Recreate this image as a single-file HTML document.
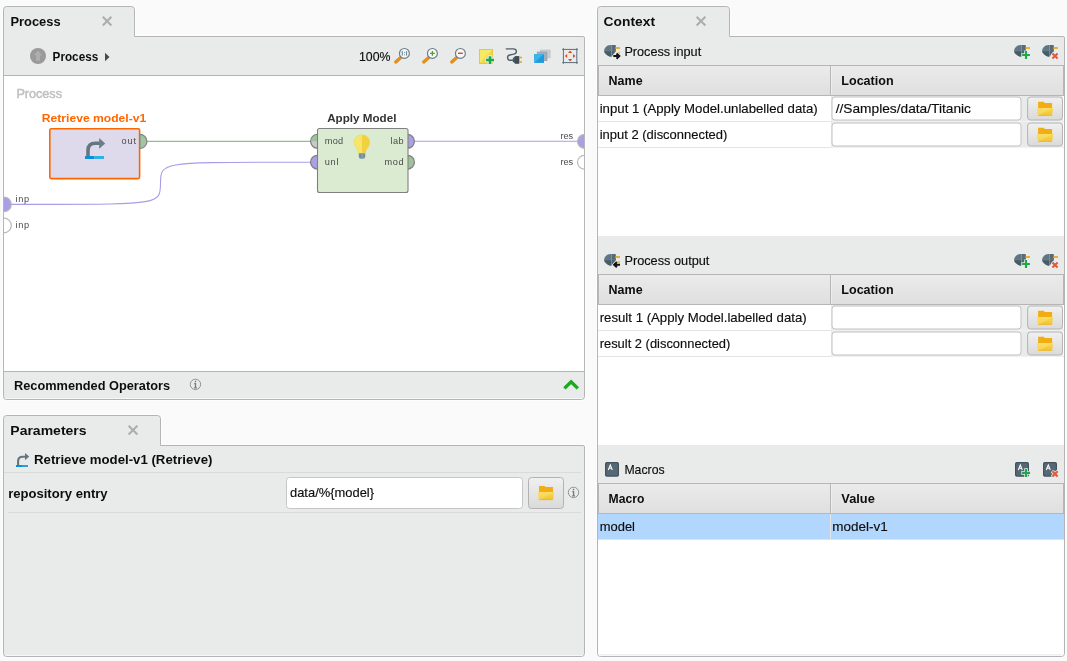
<!DOCTYPE html>
<html>
<head>
<meta charset="utf-8">
<title>RapidMiner Studio - Process</title>
<style>
html,body{margin:0;padding:0;background:#fafafa;overflow:hidden;}
body{width:1067px;height:661px;font-family:"Liberation Sans",sans-serif;}
svg{display:block;position:absolute;left:0;top:0;will-change:transform;filter:grayscale(0);}
text{font-family:"Liberation Sans",sans-serif;font-size:12.1px;fill:#0d0d0d;stroke:#0d0d0d;stroke-width:0.14px;}
.b{font-weight:bold;stroke:none;font-size:12.8px;}
.pl{font-size:9.2px;fill:#4a4a4a;stroke:none;}
</style>
</head>
<body>
<svg width="1067" height="661" viewBox="0 0 1067 661">
<rect width="1067" height="661" fill="#fafafa"/>

<defs>
<linearGradient id="fg" x1="0" y1="0" x2="0" y2="1"><stop offset="0" stop-color="#f8d957"/><stop offset="1" stop-color="#f2c22f"/></linearGradient>
</defs>
<!-- ============ PROCESS PANEL ============ -->
<g id="process-panel">
<path d="M3.5,9.5 Q3.5,6.5 6.5,6.5 H131.5 Q134.5,6.5 134.5,9.5 V36.5 H583 Q584.5,36.5 584.5,38 V396.5 Q584.5,399.5 581.5,399.5 H6.5 Q3.5,399.5 3.5,396.5 Z" fill="none" stroke="#fdfdfd" stroke-width="3"/>
<path d="M3.5,9.5 Q3.5,6.5 6.5,6.5 H131.5 Q134.5,6.5 134.5,9.5 V36.5 H583 Q584.5,36.5 584.5,38 V396.5 Q584.5,399.5 581.5,399.5 H6.5 Q3.5,399.5 3.5,396.5 Z" fill="#e9ebea" stroke="#b4b4b4"/>
<rect x="4" y="76" width="580" height="295" fill="#ffffff"/>
<path d="M4,75.5 H584 M4,371.5 H584" stroke="#b4b4b4" fill="none"/>
<text class="b" x="10.4" y="25.8" textLength="50.2" lengthAdjust="spacingAndGlyphs">Process</text>
<path d="M102.8,16.8 L111.4,25.4 M111.4,16.8 L102.8,25.4" stroke="#adadad" stroke-width="2.1" fill="none"/>
</g>
<g id="toolbar">
<circle cx="38" cy="56" r="8" fill="#9a9a9a"/>
<path d="M38,50.4 L42.2,55.3 H40 V60.8 H36 V55.3 H33.8 Z" fill="#aeaeae"/>
<text class="b" x="52.6" y="60.6" font-size="12.5" textLength="45.6" lengthAdjust="spacingAndGlyphs" style="font-size:12.5px">Process</text>
<path d="M105,52.8 L109.5,57 L105,61.2 Z" fill="#4a4a4a"/>
<text x="359" y="60.7" textLength="31.5" lengthAdjust="spacingAndGlyphs" style="font-size:12.1px">100%</text>
<g>
<path d="M395.75,61.95 L400.8,57.4" stroke="#e58e1a" stroke-width="3.4" stroke-linecap="round" fill="none"/>

<circle cx="404.4" cy="53.4" r="4.95" fill="#f4f6f7" stroke="#697c87" stroke-width="1.15"/>
<path d="M402.3,51.4 V55.6 M406.6,51.4 V55.6" stroke="#6a7c87" stroke-width="1" fill="none"/><path d="M401.4,52.3 L402.3,51.4 M405.7,52.3 L406.6,51.4" stroke="#6a7c87" stroke-width="0.7" fill="none"/><rect x="404" y="52.2" width="0.9" height="0.9" fill="#6a7c87"/><rect x="404" y="54.4" width="0.9" height="0.9" fill="#6a7c87"/>
</g><g>
<path d="M423.75,61.95 L428.8,57.4" stroke="#e58e1a" stroke-width="3.4" stroke-linecap="round" fill="none"/>

<circle cx="432.4" cy="53.4" r="4.95" fill="#f4f6f7" stroke="#697c87" stroke-width="1.15"/>
<path d="M432.4,50.9 V55.9 M419.9,53.4 H434.9" stroke="none"/><path d="M432.4,51 V55.8 M430,53.4 H434.8" stroke="#5a9e2d" stroke-width="1.3" fill="none"/>
</g><g>
<path d="M451.75,61.95 L456.8,57.4" stroke="#e58e1a" stroke-width="3.4" stroke-linecap="round" fill="none"/>

<circle cx="460.4" cy="53.4" r="4.95" fill="#f4f6f7" stroke="#697c87" stroke-width="1.15"/>
<path d="M458,53.3 H462.8" stroke="#d8472f" stroke-width="1.4" fill="none"/>
</g>
<!-- note+ -->
<g>
<rect x="479" y="49" width="14" height="15" fill="#f1d848"/>
<path d="M479,64 V49 H493 Z" fill="#f8e868"/>
<rect x="479.5" y="49.5" width="13" height="14" fill="none" stroke="#e6c93a" stroke-width="1"/>
<path d="M490,55.2 V64.6 M485.3,60 H494.7" stroke="#e9ebea" stroke-width="4.6" fill="none"/>
<path d="M490,56.2 V63.9 M486,60 H494" stroke="#1ea84c" stroke-width="2.6" fill="none"/>
</g>
<!-- plug / connect -->
<g>
<path d="M506.3,48.9 H513.2 Q516.4,48.9 516.4,51.6 Q516.4,54 513,54.4 L510.6,54.7 Q507.6,55.2 507.6,57.4 Q507.6,60.3 511,60.3 H513.5" stroke="#50616b" stroke-width="1.4" fill="none" stroke-linecap="round"/>
<path d="M512.8,58.2 L515,56.2 H519.2 V63.6 H515 L512.8,61.8 Z" fill="#4a5a63"/>
<path d="M515,56.2 H519.2 V63.6 H515 Z" fill="#3f4e56"/>
<path d="M519.2,57.6 H522 M519.2,62.1 H522" stroke="#eba11d" stroke-width="1.5" fill="none"/>
</g>
<!-- layers -->
<g>
<rect x="540.3" y="50" width="9.8" height="7.8" fill="#c7cfd4" stroke="#b4bec4" stroke-width="0.6"/>
<rect x="537.2" y="52" width="9.8" height="8.7" fill="#a3aeb5" stroke="#8f9ba3" stroke-width="0.6"/>
<rect x="534.2" y="54" width="9.8" height="8.9" fill="#1a9be0"/>
<path d="M534.2,62.9 V54 H544 Z" fill="#40b2ea"/>
</g>
<!-- auto arrange -->
<g>
<path d="M562.2,49.4 H578 M562.2,62.6 H578 M563.4,48.2 V63.8 M576.8,48.2 V63.8" stroke="#5b707c" stroke-width="1" fill="none"/>
<path d="M570.1,50.6 L572.2,53 H568 Z M570.1,61.4 L572.2,59 H568 Z M564.8,56 L567.2,53.9 V58.1 Z M575.4,56 L573,53.9 V58.1 Z" fill="#e14e1e"/>
</g>
</g>
<defs><clipPath id="cvclip"><rect x="4" y="76" width="580" height="295"/></clipPath></defs>
<g id="canvas" clip-path="url(#cvclip)">
<text x="16.4" y="98" textLength="45.6" lengthAdjust="spacingAndGlyphs" style="fill:#c1c1c1;stroke:#c1c1c1;stroke-width:0.5px">Process</text>
<!-- connections -->
<path d="M147,141.3 H311" stroke="#8fbf8b" stroke-width="1.2" fill="none"/>
<path d="M415,141.3 H577" stroke="#a99de6" stroke-width="1.1" fill="none"/>
<path d="M11,204.4 H40 C160,204.4 160.5,204 160.5,183.3 C160.5,162.6 161,162.2 281,162.2 H311" stroke="#a99de6" stroke-width="1.1" fill="none"/>
<!-- process ports left -->
<circle cx="4" cy="204.4" r="7.3" fill="#a99ee8" stroke="#b9b9b9" stroke-width="1.2"/>
<circle cx="4" cy="225.5" r="7.3" fill="#ffffff" stroke="#b9b9b9" stroke-width="1.2"/>
<text class="pl" x="15.4" y="201.8" textLength="13.8" lengthAdjust="spacing">inp</text>
<text class="pl" x="15.4" y="227.5" textLength="13.8" lengthAdjust="spacing">inp</text>
<!-- process ports right -->
<circle cx="584.4" cy="141.4" r="6.9" fill="#a99ee8" stroke="#b9b9b9" stroke-width="1.2"/>
<circle cx="584.4" cy="162.3" r="6.9" fill="#ffffff" stroke="#b9b9b9" stroke-width="1.2"/>
<text class="pl" x="560.4" y="138.9" textLength="12.7" lengthAdjust="spacing">res</text>
<text class="pl" x="560.4" y="164.7" textLength="12.7" lengthAdjust="spacing">res</text>
<!-- Retrieve operator -->
<text class="b" x="41.8" y="122" textLength="104.4" lengthAdjust="spacingAndGlyphs" style="font-size:11.6px;fill:#ff6600;stroke:none">Retrieve model-v1</text>
<rect x="49.8" y="128.8" width="89.8" height="49.8" rx="1.5" fill="#dedaeb" stroke="#ff6600" stroke-width="1.6"/>
<path d="M139.9,134.4 A7,7 0 0 1 139.9,148.4 Z" fill="#9fc79b" stroke="#858585" stroke-width="1.25"/>
<text class="pl" x="121.5" y="144" textLength="14.6" lengthAdjust="spacing">out</text>
<g>
<path d="M88,156.2 V150.5 Q88,143.3 95.5,143.3 H100" stroke="#647780" stroke-width="3.6" fill="none"/>
<path d="M99.2,138 L105.2,143.4 L99.2,148.8 Z" fill="#6b7d86"/>
<rect x="85" y="156" width="9.5" height="3" fill="#0c8ed8"/>
<rect x="94.5" y="156" width="9.5" height="3" fill="#2fb0ea"/>
</g>
<!-- Apply Model operator -->
<text class="b" x="327.2" y="122" textLength="69.2" lengthAdjust="spacingAndGlyphs" style="font-size:11.6px;fill:#333;stroke:none">Apply Model</text>
<g stroke="#828282" stroke-width="1.3">
<circle cx="317.5" cy="141.3" r="6.9" fill="#c9c9c9"/>
<circle cx="317.5" cy="162.2" r="6.9" fill="#ab9fe6"/>
<circle cx="407.5" cy="141.3" r="6.9" fill="#ab9fe6"/>
<circle cx="407.5" cy="162.2" r="6.9" fill="#9dc39a"/>
</g>
<path d="M311.2,141.3 A6.3,6.3 0 0 1 317.5,135 V141.3 Z" fill="#9dc39a"/>
<rect x="317.5" y="128.5" width="90.5" height="64" rx="2" fill="#dbebd2" stroke="#808080" stroke-width="1.1"/>
<text class="pl" x="324.7" y="144" textLength="18.5" lengthAdjust="spacing">mod</text>
<text class="pl" x="324.7" y="164.9" textLength="13.8" lengthAdjust="spacing">unl</text>
<text class="pl" x="390.5" y="144" textLength="13" lengthAdjust="spacing">lab</text>
<text class="pl" x="384.5" y="164.9" textLength="19" lengthAdjust="spacing">mod</text>
<g>
<path d="M362,134.9 C357.4,134.9 354.2,138.2 354.2,142.3 C354.2,145.2 355.8,146.8 357,148.4 C357.9,149.6 358.2,150.8 358.2,152.8 H365.8 C365.8,150.8 366.1,149.6 367,148.4 C368.2,146.8 369.8,145.2 369.8,142.3 C369.8,138.2 366.6,134.9 362,134.9 Z" fill="#f0d23f" stroke="#ecd04a" stroke-width="0.6"/>
<path d="M362,134.9 C357.4,134.9 354.2,138.2 354.2,142.3 C354.2,145.2 355.8,146.8 357,148.4 C357.9,149.6 358.2,150.8 358.2,152.8 H362 Z" fill="#f6e566"/>
<path d="M358.8,153.2 H365.2 V156.6 Q365.2,158.8 363,158.8 H361 Q358.8,158.8 358.8,156.6 Z" fill="#758d9c"/>
<rect x="361.6" y="153.2" width="1.2" height="5.6" fill="#90a5b2"/>
</g>
</g>
<g id="recommended">
<path d="M5.5,398.5 H582.5" stroke="#f7f7f7" fill="none"/>
<text class="b" x="14" y="389.9" textLength="156" lengthAdjust="spacingAndGlyphs">Recommended Operators</text>
<circle cx="195.45" cy="384.4" r="5.2" fill="none" stroke="#8c8c8c" stroke-width="0.95"/><rect x="194.75" y="380.80" width="1.5" height="1.5" rx="0.4" fill="#7a7a7a"/><path d="M194.25,383.65 H195.50 V387.70 M194.15,387.85 H196.90" stroke="#7a7a7a" stroke-width="1.15" fill="none"/><rect x="194.90" y="383.50" width="1.2" height="4.4" fill="#7a7a7a"/>
<path d="M564.4,388.4 L571.1,381.8 L577.8,388.4" stroke="#1aaa1a" stroke-width="3.4" fill="none" stroke-linejoin="miter"/>
</g>
<g id="params-panel">
<path d="M3.5,418.5 Q3.5,415.5 6.5,415.5 H157.5 Q160.5,415.5 160.5,418.5 V445.5 H583 Q584.5,445.5 584.5,447 V653.5 Q584.5,656.5 581.5,656.5 H6.5 Q3.5,656.5 3.5,653.5 Z" fill="none" stroke="#fdfdfd" stroke-width="3"/>
<path d="M3.5,418.5 Q3.5,415.5 6.5,415.5 H157.5 Q160.5,415.5 160.5,418.5 V445.5 H583 Q584.5,445.5 584.5,447 V653.5 Q584.5,656.5 581.5,656.5 H6.5 Q3.5,656.5 3.5,653.5 Z" fill="#e9ebea" stroke="#b4b4b4"/>
<text class="b" x="10.3" y="435" textLength="76.3" lengthAdjust="spacingAndGlyphs">Parameters</text>
<path d="M128.6,425.8 L137.4,434.4 M137.4,425.8 L128.6,434.4" stroke="#adadad" stroke-width="2.1" fill="none"/>
<path d="M5.5,655.5 H582.5" stroke="#f7f7f7" fill="none"/>
<path d="M4,472.5 H581" stroke="#d9dada" fill="none"/>
<path d="M8,512.5 H581" stroke="#d9dada" fill="none"/>
<g>
<path d="M18.1,465.2 V461.2 Q18.1,456.7 22.6,456.7 H25.6" stroke="#63767f" stroke-width="2.1" fill="none"/>
<path d="M25,452.9 L29.2,456.6 L25,460.2 Z" fill="#63767f"/>
<rect x="16" y="465" width="6" height="2" fill="#0c8ed8"/>
<rect x="22" y="465" width="6" height="2" fill="#2a9fdf"/>
</g>
<text class="b" x="34" y="464.3" textLength="178.4" lengthAdjust="spacingAndGlyphs">Retrieve model-v1 (Retrieve)</text>
<text class="b" x="8.2" y="498.1" textLength="99.4" lengthAdjust="spacingAndGlyphs">repository entry</text>
<rect x="286.5" y="477.5" width="236" height="31" rx="3" fill="#ffffff" stroke="#c6c6c6"/>
<text x="290" y="497" textLength="84" lengthAdjust="spacingAndGlyphs">data/%{model}</text>
<defs><linearGradient id="btng" x1="0" y1="0" x2="0" y2="1"><stop offset="0" stop-color="#f0f0f0"/><stop offset="1" stop-color="#dadada"/></linearGradient></defs>
<rect x="528.5" y="477.5" width="35" height="31" rx="3" fill="url(#btng)" stroke="#b2b2b2"/>
<g transform="translate(538,486)"><path d="M1,0 H6.6 L7.6,1.1 H15 V8 H1 Z" fill="#f2ad13"/><path d="M0.1,6.1 H16 L15,14 H0.9 Z" fill="url(#fg)"/><path d="M0.9,13.7 H15" stroke="#e9b62c" stroke-width="0.7" fill="none"/><path d="M0.9,14 L0.1,6.1 H16 Z" fill="#fbe47a" opacity="0.45"/></g>
<circle cx="573.5" cy="492.4" r="5.2" fill="none" stroke="#8c8c8c" stroke-width="0.95"/><rect x="572.80" y="488.80" width="1.5" height="1.5" rx="0.4" fill="#7a7a7a"/><path d="M572.30,491.65 H573.55 V495.70 M572.20,495.85 H574.95" stroke="#7a7a7a" stroke-width="1.15" fill="none"/><rect x="572.95" y="491.50" width="1.2" height="4.4" fill="#7a7a7a"/>
</g>
<g id="context-panel">
<defs><linearGradient id="hdrg" x1="0" y1="0" x2="0" y2="1"><stop offset="0" stop-color="#ebebeb"/><stop offset="1" stop-color="#dfdfdf"/></linearGradient></defs>
<path d="M597.5,9.5 Q597.5,6.5 600.5,6.5 H726.5 Q729.5,6.5 729.5,9.5 V36.5 H1063 Q1064.5,36.5 1064.5,38 V653.5 Q1064.5,656.5 1061.5,656.5 H600.5 Q597.5,656.5 597.5,653.5 Z" fill="none" stroke="#fdfdfd" stroke-width="3"/>
<path d="M597.5,9.5 Q597.5,6.5 600.5,6.5 H726.5 Q729.5,6.5 729.5,9.5 V36.5 H1063 Q1064.5,36.5 1064.5,38 V653.5 Q1064.5,656.5 1061.5,656.5 H600.5 Q597.5,656.5 597.5,653.5 Z" fill="#e9ebea" stroke="#b4b4b4"/>
<text class="b" x="603.6" y="25.8" textLength="51.4" lengthAdjust="spacingAndGlyphs">Context</text>
<path d="M696.6,16.8 L705.4,25.4 M705.4,16.8 L696.6,25.4" stroke="#adadad" stroke-width="2.1" fill="none"/>
<g>
<g transform="translate(604,44)">
<clipPath id="plc1"><path d="M0.1,7 C0.1,4 3,1 6.2,1 H11 Q11.9,1 11.9,1.9 V7.3 L7.6,12.4 Q6.8,13.1 5.9,12.7 C3,11.4 0.1,9.6 0.1,7 Z"/></clipPath>
<g clip-path="url(#plc1)">
<rect x="0" y="0" width="7.4" height="7"fill="#607783"/>
<rect x="7.4" y="0" width="5" height="7" fill="#566d79"/>
<rect x="0" y="7" width="7.4" height="7" fill="#465c68"/>
<rect x="7.4" y="7" width="5" height="7" fill="#4c636f"/>
<path d="M7.4,0 V14" stroke="#8a9da8" stroke-width="0.7" opacity="0.55"/>
<path d="M0,7 H12" stroke="#7a8f9a" stroke-width="0.5" opacity="0.6"/>
</g>
<rect x="11.4" y="3.1" width="4.6" height="1.8" fill="#eba91f"/>
</g><rect x="617.4" y="52.4" width="2.6" height="1.2" fill="#eba91f"/><path d="M613.2,56.1 H618.2 M616.5,53.4 L619.3,56.1 L616.5,58.8" stroke="#e9ebea" stroke-width="3.4" fill="none"/><path d="M613.3,56.1 H618.4 M616.5,53.5 L619.3,56.1 L616.5,58.7" stroke="#141414" stroke-width="2" fill="none" stroke-linejoin="miter"/>
<text x="624.4" y="56.1" textLength="76.8" lengthAdjust="spacingAndGlyphs" style="font-size:12.1px">Process input</text>
<g transform="translate(1014,44)">
<clipPath id="plc2"><path d="M0.1,7 C0.1,4 3,1 6.2,1 H11 Q11.9,1 11.9,1.9 V7.3 L7.6,12.4 Q6.8,13.1 5.9,12.7 C3,11.4 0.1,9.6 0.1,7 Z"/></clipPath>
<g clip-path="url(#plc2)">
<rect x="0" y="0" width="7.4" height="7"fill="#607783"/>
<rect x="7.4" y="0" width="5" height="7" fill="#566d79"/>
<rect x="0" y="7" width="7.4" height="7" fill="#465c68"/>
<rect x="7.4" y="7" width="5" height="7" fill="#4c636f"/>
<path d="M7.4,0 V14" stroke="#8a9da8" stroke-width="0.7" opacity="0.55"/>
<path d="M0,7 H12" stroke="#7a8f9a" stroke-width="0.5" opacity="0.6"/>
</g>
<rect x="11.4" y="3.1" width="4.6" height="1.8" fill="#eba91f"/>
</g><path d="M1026,50.4 V59.6 M1021.4,55 H1030.6" stroke="#e9ebea" stroke-width="3.6" fill="none"/><path d="M1026,51.1 V58.9 M1022.1,55 H1029.9" stroke="#1ea84c" stroke-width="2.1" fill="none"/><g transform="translate(1042,44)">
<clipPath id="plc3"><path d="M0.1,7 C0.1,4 3,1 6.2,1 H11 Q11.9,1 11.9,1.9 V7.3 L7.6,12.4 Q6.8,13.1 5.9,12.7 C3,11.4 0.1,9.6 0.1,7 Z"/></clipPath>
<g clip-path="url(#plc3)">
<rect x="0" y="0" width="7.4" height="7"fill="#607783"/>
<rect x="7.4" y="0" width="5" height="7" fill="#566d79"/>
<rect x="0" y="7" width="7.4" height="7" fill="#465c68"/>
<rect x="7.4" y="7" width="5" height="7" fill="#4c636f"/>
<path d="M7.4,0 V14" stroke="#8a9da8" stroke-width="0.7" opacity="0.55"/>
<path d="M0,7 H12" stroke="#7a8f9a" stroke-width="0.5" opacity="0.6"/>
</g>
<rect x="11.4" y="3.1" width="4.6" height="1.8" fill="#eba91f"/>
</g><path d="M1052,53 L1058,59 M1058,53 L1052,59" stroke="#e9ebea" stroke-width="3.6" fill="none"/><path d="M1052.4,53.4 L1057.6,58.6 M1057.6,53.4 L1052.4,58.6" stroke="#e05a3b" stroke-width="2.1" fill="none"/>
<rect x="598" y="96" width="466" height="140" fill="#ffffff"/>
<rect x="598.5" y="65.5" width="465" height="30" fill="url(#hdrg)" stroke="#b6b6b6"/>
<path d="M830.5,66 V95" stroke="#b6b6b6" fill="none"/>
<path d="M831.5,66 V95" stroke="#f2f2f2" fill="none" opacity="0.7"/>
<text class="b" x="608.6" y="84.9" textLength="34" lengthAdjust="spacingAndGlyphs" style="font-size:12.5px">Name</text>
<text class="b" x="841.3" y="84.9" textLength="52.3" lengthAdjust="spacingAndGlyphs" style="font-size:12.5px">Location</text>
<path d="M598,121.5 H1064" stroke="#e4e4e4" fill="none"/>
<text x="599.7" y="112.9" textLength="218" lengthAdjust="spacingAndGlyphs">input 1 (Apply Model.unlabelled data)</text>
<rect x="831" y="96" width="232" height="25" fill="#e9ebea"/><path d="M831,121.5 H1063" stroke="#f0f1f1" fill="none"/><rect x="832" y="97" width="189" height="23" rx="3" fill="#ffffff" stroke="#c2c2c2"/>
<text x="835.7" y="112.9" textLength="135.3" lengthAdjust="spacingAndGlyphs">//Samples/data/Titanic</text>
<rect x="1027.6" y="97" width="34.9" height="23" rx="3" fill="url(#btng)" stroke="#b4b4b4"/>
<g transform="translate(1037.1,101.8)"><path d="M1,0 H6.6 L7.6,1.1 H15 V8 H1 Z" fill="#f2ad13"/><path d="M0.1,6.1 H16 L15,14 H0.9 Z" fill="url(#fg)"/><path d="M0.9,13.7 H15" stroke="#e9b62c" stroke-width="0.7" fill="none"/><path d="M0.9,14 L0.1,6.1 H16 Z" fill="#fbe47a" opacity="0.45"/></g>
<path d="M598,147.5 H1064" stroke="#e4e4e4" fill="none"/>
<text x="599.7" y="138.9" textLength="127.6" lengthAdjust="spacingAndGlyphs">input 2 (disconnected)</text>
<rect x="831" y="122" width="232" height="25" fill="#e9ebea"/><path d="M831,147.5 H1063" stroke="#f0f1f1" fill="none"/><rect x="832" y="123" width="189" height="23" rx="3" fill="#ffffff" stroke="#c2c2c2"/>
<rect x="1027.6" y="123" width="34.9" height="23" rx="3" fill="url(#btng)" stroke="#b4b4b4"/>
<g transform="translate(1037.1,127.8)"><path d="M1,0 H6.6 L7.6,1.1 H15 V8 H1 Z" fill="#f2ad13"/><path d="M0.1,6.1 H16 L15,14 H0.9 Z" fill="url(#fg)"/><path d="M0.9,13.7 H15" stroke="#e9b62c" stroke-width="0.7" fill="none"/><path d="M0.9,14 L0.1,6.1 H16 Z" fill="#fbe47a" opacity="0.45"/></g>
</g>
<g>
<g transform="translate(604,253)">
<clipPath id="plc4"><path d="M0.1,7 C0.1,4 3,1 6.2,1 H11 Q11.9,1 11.9,1.9 V7.3 L7.6,12.4 Q6.8,13.1 5.9,12.7 C3,11.4 0.1,9.6 0.1,7 Z"/></clipPath>
<g clip-path="url(#plc4)">
<rect x="0" y="0" width="7.4" height="7"fill="#607783"/>
<rect x="7.4" y="0" width="5" height="7" fill="#566d79"/>
<rect x="0" y="7" width="7.4" height="7" fill="#465c68"/>
<rect x="7.4" y="7" width="5" height="7" fill="#4c636f"/>
<path d="M7.4,0 V14" stroke="#8a9da8" stroke-width="0.7" opacity="0.55"/>
<path d="M0,7 H12" stroke="#7a8f9a" stroke-width="0.5" opacity="0.6"/>
</g>
<rect x="11.4" y="3.1" width="4.6" height="1.8" fill="#eba91f"/>
</g><rect x="617.4" y="261.4" width="2.6" height="1.2" fill="#eba91f"/><path d="M620,264.7 H615 M616.9,262 L614.1,264.7 L616.9,267.4" stroke="#e9ebea" stroke-width="3.4" fill="none"/><path d="M620,264.7 H615 M616.9,262.1 L614.1,264.7 L616.9,267.3" stroke="#141414" stroke-width="2" fill="none" stroke-linejoin="miter"/>
<text x="624.4" y="265.1" textLength="85" lengthAdjust="spacingAndGlyphs" style="font-size:12.1px">Process output</text>
<g transform="translate(1014,253)">
<clipPath id="plc5"><path d="M0.1,7 C0.1,4 3,1 6.2,1 H11 Q11.9,1 11.9,1.9 V7.3 L7.6,12.4 Q6.8,13.1 5.9,12.7 C3,11.4 0.1,9.6 0.1,7 Z"/></clipPath>
<g clip-path="url(#plc5)">
<rect x="0" y="0" width="7.4" height="7"fill="#607783"/>
<rect x="7.4" y="0" width="5" height="7" fill="#566d79"/>
<rect x="0" y="7" width="7.4" height="7" fill="#465c68"/>
<rect x="7.4" y="7" width="5" height="7" fill="#4c636f"/>
<path d="M7.4,0 V14" stroke="#8a9da8" stroke-width="0.7" opacity="0.55"/>
<path d="M0,7 H12" stroke="#7a8f9a" stroke-width="0.5" opacity="0.6"/>
</g>
<rect x="11.4" y="3.1" width="4.6" height="1.8" fill="#eba91f"/>
</g><path d="M1026,259.4 V268.6 M1021.4,264 H1030.6" stroke="#e9ebea" stroke-width="3.6" fill="none"/><path d="M1026,260.1 V267.9 M1022.1,264 H1029.9" stroke="#1ea84c" stroke-width="2.1" fill="none"/><g transform="translate(1042,253)">
<clipPath id="plc6"><path d="M0.1,7 C0.1,4 3,1 6.2,1 H11 Q11.9,1 11.9,1.9 V7.3 L7.6,12.4 Q6.8,13.1 5.9,12.7 C3,11.4 0.1,9.6 0.1,7 Z"/></clipPath>
<g clip-path="url(#plc6)">
<rect x="0" y="0" width="7.4" height="7"fill="#607783"/>
<rect x="7.4" y="0" width="5" height="7" fill="#566d79"/>
<rect x="0" y="7" width="7.4" height="7" fill="#465c68"/>
<rect x="7.4" y="7" width="5" height="7" fill="#4c636f"/>
<path d="M7.4,0 V14" stroke="#8a9da8" stroke-width="0.7" opacity="0.55"/>
<path d="M0,7 H12" stroke="#7a8f9a" stroke-width="0.5" opacity="0.6"/>
</g>
<rect x="11.4" y="3.1" width="4.6" height="1.8" fill="#eba91f"/>
</g><path d="M1052,262 L1058,268 M1058,262 L1052,268" stroke="#e9ebea" stroke-width="3.6" fill="none"/><path d="M1052.4,262.4 L1057.6,267.6 M1057.6,262.4 L1052.4,267.6" stroke="#e05a3b" stroke-width="2.1" fill="none"/>
<rect x="598" y="305" width="466" height="140" fill="#ffffff"/>
<rect x="598.5" y="274.5" width="465" height="30" fill="url(#hdrg)" stroke="#b6b6b6"/>
<path d="M830.5,275 V304" stroke="#b6b6b6" fill="none"/>
<path d="M831.5,275 V304" stroke="#f2f2f2" fill="none" opacity="0.7"/>
<text class="b" x="608.6" y="293.9" textLength="34" lengthAdjust="spacingAndGlyphs" style="font-size:12.5px">Name</text>
<text class="b" x="841.3" y="293.9" textLength="52.3" lengthAdjust="spacingAndGlyphs" style="font-size:12.5px">Location</text>
<path d="M598,330.5 H1064" stroke="#e4e4e4" fill="none"/>
<text x="599.7" y="321.9" textLength="207" lengthAdjust="spacingAndGlyphs">result 1 (Apply Model.labelled data)</text>
<rect x="831" y="305" width="232" height="25" fill="#e9ebea"/><path d="M831,330.5 H1063" stroke="#f0f1f1" fill="none"/><rect x="832" y="306" width="189" height="23" rx="3" fill="#ffffff" stroke="#c2c2c2"/>
<rect x="1027.6" y="306" width="34.9" height="23" rx="3" fill="url(#btng)" stroke="#b4b4b4"/>
<g transform="translate(1037.1,310.8)"><path d="M1,0 H6.6 L7.6,1.1 H15 V8 H1 Z" fill="#f2ad13"/><path d="M0.1,6.1 H16 L15,14 H0.9 Z" fill="url(#fg)"/><path d="M0.9,13.7 H15" stroke="#e9b62c" stroke-width="0.7" fill="none"/><path d="M0.9,14 L0.1,6.1 H16 Z" fill="#fbe47a" opacity="0.45"/></g>
<path d="M598,356.5 H1064" stroke="#e4e4e4" fill="none"/>
<text x="599.7" y="347.9" textLength="130.6" lengthAdjust="spacingAndGlyphs">result 2 (disconnected)</text>
<rect x="831" y="331" width="232" height="25" fill="#e9ebea"/><path d="M831,356.5 H1063" stroke="#f0f1f1" fill="none"/><rect x="832" y="332" width="189" height="23" rx="3" fill="#ffffff" stroke="#c2c2c2"/>
<rect x="1027.6" y="332" width="34.9" height="23" rx="3" fill="url(#btng)" stroke="#b4b4b4"/>
<g transform="translate(1037.1,336.8)"><path d="M1,0 H6.6 L7.6,1.1 H15 V8 H1 Z" fill="#f2ad13"/><path d="M0.1,6.1 H16 L15,14 H0.9 Z" fill="url(#fg)"/><path d="M0.9,13.7 H15" stroke="#e9b62c" stroke-width="0.7" fill="none"/><path d="M0.9,14 L0.1,6.1 H16 Z" fill="#fbe47a" opacity="0.45"/></g>
</g>
<g>
<g transform="translate(605,462)"><rect x="0" y="0" width="14" height="14.8" rx="1.8" fill="#41525c"/><rect x="1.2" y="1.2" width="11.6" height="12.4" rx="1" fill="#556975"/><path d="M3.3,8 L5.3,2.9 L7.3,8 M4.1,6.3 H6.5" stroke="#ffffff" stroke-width="1.05" fill="none"/></g>
<text x="624.4" y="474.1" textLength="40.2" lengthAdjust="spacingAndGlyphs" style="font-size:12.1px">Macros</text>
<g transform="translate(1015,462)"><rect x="0" y="0" width="14" height="14.8" rx="1.8" fill="#41525c"/><rect x="1.2" y="1.2" width="11.6" height="12.4" rx="1" fill="#556975"/><path d="M3.3,8 L5.3,2.9 L7.3,8 M4.1,6.3 H6.5" stroke="#ffffff" stroke-width="1.05" fill="none"/></g><path d="M1026.05,468.2 V477.6 M1021.35,472.9 H1030.75" stroke="#e9ebea" stroke-width="3.6" fill="none"/><path d="M1026.05,468.9 V476.9 M1022.05,472.9 H1030.05" stroke="#1ea84c" stroke-width="2.1" fill="none"/><g transform="translate(1043,462)"><rect x="0" y="0" width="14" height="14.8" rx="1.8" fill="#41525c"/><rect x="1.2" y="1.2" width="11.6" height="12.4" rx="1" fill="#556975"/><path d="M3.3,8 L5.3,2.9 L7.3,8 M4.1,6.3 H6.5" stroke="#ffffff" stroke-width="1.05" fill="none"/></g><path d="M1052,470.9 L1058,476.9 M1058,470.9 L1052,476.9" stroke="#e9ebea" stroke-width="3.6" fill="none"/><path d="M1052.4,471.3 L1057.6,476.5 M1057.6,471.3 L1052.4,476.5" stroke="#e05a3b" stroke-width="2.1" fill="none"/>
<rect x="598" y="514" width="466" height="140" fill="#ffffff"/>
<path d="M598,654.5 H1064" stroke="#eff0f0" fill="none"/><path d="M599,655.5 H1063" stroke="#f7f7f7" fill="none"/>
<rect x="598.5" y="483.5" width="465" height="30" fill="url(#hdrg)" stroke="#b6b6b6"/>
<path d="M830.5,484 V513" stroke="#b6b6b6" fill="none"/>
<path d="M831.5,484 V513" stroke="#f2f2f2" fill="none" opacity="0.7"/>
<text class="b" x="608.6" y="502.9" textLength="35.8" lengthAdjust="spacingAndGlyphs" style="font-size:12.5px">Macro</text>
<text class="b" x="841.3" y="502.9" textLength="33.5" lengthAdjust="spacingAndGlyphs" style="font-size:12.5px">Value</text>
<rect x="598" y="514" width="466" height="25" fill="#b2d7ff"/>
<path d="M598,539.5 H1064" stroke="#e2e2e2" fill="none"/>
<path d="M830.5,514 V540" stroke="#e3e3e3" fill="none"/>
<text x="599.7" y="530.9" textLength="35.3" lengthAdjust="spacingAndGlyphs">model</text>
<text x="832.3" y="530.9" textLength="55.5" lengthAdjust="spacingAndGlyphs">model-v1</text>
</g>
</g>
</svg>
</body>
</html>
